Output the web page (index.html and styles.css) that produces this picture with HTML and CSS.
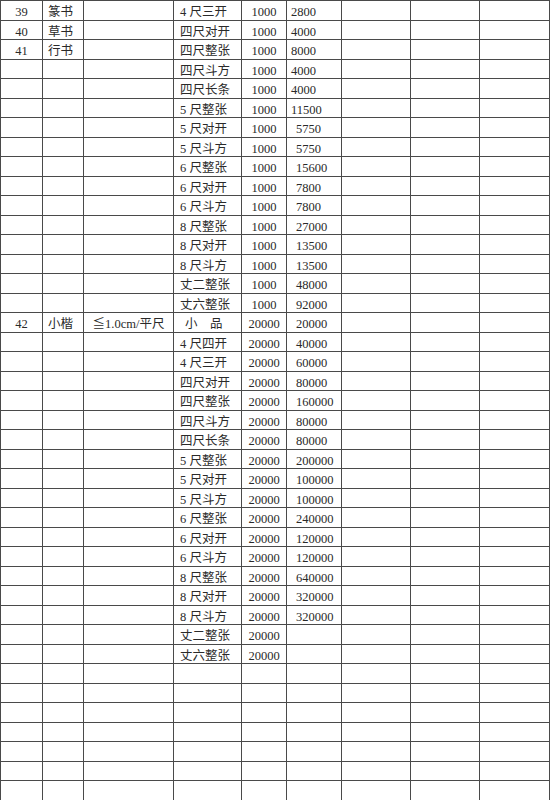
FILE: index.html
```html
<!DOCTYPE html>
<html lang="zh-CN">
<head>
<meta charset="utf-8">
<title>价格表</title>
<link rel="stylesheet" href="styles.css">
</head>
<body>
<div class="sheet">
  <div class="row a"><span>39</span><span>篆书</span><span></span><span>4 尺三开</span><span>1000</span><span>2800</span><span></span><span></span><span></span></div>
  <div class="row a"><span>40</span><span>草书</span><span></span><span>四尺对开</span><span>1000</span><span>4000</span><span></span><span></span><span></span></div>
  <div class="row a"><span>41</span><span>行书</span><span></span><span>四尺整张</span><span>1000</span><span>8000</span><span></span><span></span><span></span></div>
  <div class="row a"><span></span><span></span><span></span><span>四尺斗方</span><span>1000</span><span>4000</span><span></span><span></span><span></span></div>
  <div class="row a"><span></span><span></span><span></span><span>四尺长条</span><span>1000</span><span>4000</span><span></span><span></span><span></span></div>
  <div class="row a"><span></span><span></span><span></span><span>5 尺整张</span><span>1000</span><span>11500</span><span></span><span></span><span></span></div>
  <div class="row"><span></span><span></span><span></span><span>5 尺对开</span><span>1000</span><span>5750</span><span></span><span></span><span></span></div>
  <div class="row"><span></span><span></span><span></span><span>5 尺斗方</span><span>1000</span><span>5750</span><span></span><span></span><span></span></div>
  <div class="row"><span></span><span></span><span></span><span>6 尺整张</span><span>1000</span><span>15600</span><span></span><span></span><span></span></div>
  <div class="row"><span></span><span></span><span></span><span>6 尺对开</span><span>1000</span><span>7800</span><span></span><span></span><span></span></div>
  <div class="row"><span></span><span></span><span></span><span>6 尺斗方</span><span>1000</span><span>7800</span><span></span><span></span><span></span></div>
  <div class="row"><span></span><span></span><span></span><span>8 尺整张</span><span>1000</span><span>27000</span><span></span><span></span><span></span></div>
  <div class="row"><span></span><span></span><span></span><span>8 尺对开</span><span>1000</span><span>13500</span><span></span><span></span><span></span></div>
  <div class="row"><span></span><span></span><span></span><span>8 尺斗方</span><span>1000</span><span>13500</span><span></span><span></span><span></span></div>
  <div class="row"><span></span><span></span><span></span><span>丈二整张</span><span>1000</span><span>48000</span><span></span><span></span><span></span></div>
  <div class="row"><span></span><span></span><span></span><span>丈六整张</span><span>1000</span><span>92000</span><span></span><span></span><span></span></div>
  <div class="row"><span>42</span><span>小楷</span><span>≦1.0cm/平尺</span><span><b class="ind">小　品</b></span><span>20000</span><span>20000</span><span></span><span></span><span></span></div>
  <div class="row"><span></span><span></span><span></span><span>4 尺四开</span><span>20000</span><span>40000</span><span></span><span></span><span></span></div>
  <div class="row"><span></span><span></span><span></span><span>4 尺三开</span><span>20000</span><span>60000</span><span></span><span></span><span></span></div>
  <div class="row"><span></span><span></span><span></span><span>四尺对开</span><span>20000</span><span>80000</span><span></span><span></span><span></span></div>
  <div class="row"><span></span><span></span><span></span><span>四尺整张</span><span>20000</span><span>160000</span><span></span><span></span><span></span></div>
  <div class="row"><span></span><span></span><span></span><span>四尺斗方</span><span>20000</span><span>80000</span><span></span><span></span><span></span></div>
  <div class="row"><span></span><span></span><span></span><span>四尺长条</span><span>20000</span><span>80000</span><span></span><span></span><span></span></div>
  <div class="row"><span></span><span></span><span></span><span>5 尺整张</span><span>20000</span><span>200000</span><span></span><span></span><span></span></div>
  <div class="row"><span></span><span></span><span></span><span>5 尺对开</span><span>20000</span><span>100000</span><span></span><span></span><span></span></div>
  <div class="row"><span></span><span></span><span></span><span>5 尺斗方</span><span>20000</span><span>100000</span><span></span><span></span><span></span></div>
  <div class="row"><span></span><span></span><span></span><span>6 尺整张</span><span>20000</span><span>240000</span><span></span><span></span><span></span></div>
  <div class="row"><span></span><span></span><span></span><span>6 尺对开</span><span>20000</span><span>120000</span><span></span><span></span><span></span></div>
  <div class="row"><span></span><span></span><span></span><span>6 尺斗方</span><span>20000</span><span>120000</span><span></span><span></span><span></span></div>
  <div class="row"><span></span><span></span><span></span><span>8 尺整张</span><span>20000</span><span>640000</span><span></span><span></span><span></span></div>
  <div class="row"><span></span><span></span><span></span><span>8 尺对开</span><span>20000</span><span>320000</span><span></span><span></span><span></span></div>
  <div class="row"><span></span><span></span><span></span><span>8 尺斗方</span><span>20000</span><span>320000</span><span></span><span></span><span></span></div>
  <div class="row"><span></span><span></span><span></span><span>丈二整张</span><span>20000</span><span></span><span></span><span></span><span></span></div>
  <div class="row"><span></span><span></span><span></span><span>丈六整张</span><span>20000</span><span></span><span></span><span></span><span></span></div>
  <div class="row"><span></span><span></span><span></span><span></span><span></span><span></span><span></span><span></span><span></span></div>
  <div class="row"><span></span><span></span><span></span><span></span><span></span><span></span><span></span><span></span><span></span></div>
  <div class="row"><span></span><span></span><span></span><span></span><span></span><span></span><span></span><span></span><span></span></div>
  <div class="row"><span></span><span></span><span></span><span></span><span></span><span></span><span></span><span></span><span></span></div>
  <div class="row"><span></span><span></span><span></span><span></span><span></span><span></span><span></span><span></span><span></span></div>
  <div class="row"><span></span><span></span><span></span><span></span><span></span><span></span><span></span><span></span><span></span></div>
  <div class="row"><span></span><span></span><span></span><span></span><span></span><span></span><span></span><span></span><span></span></div>
</div>
</body>
</html>
```
FILE: styles.css
```css
html, body {
  margin: 0;
  padding: 0;
  background: #ffffff;
}

.sheet {
  display: grid;
  grid-template-columns: 42px 41px 90px 68px 45px 55px 69px 69px 70px;
  grid-auto-rows: 19.5px;
  width: 550px;
  box-sizing: border-box;
  border-left: 1px solid #4a4a4a;
  border-top: 1px solid #4a4a4a;
  font-family: "Liberation Serif", "Noto Sans CJK SC", serif;
  font-size: 12.5px;
  color: #2a2a2a;
}

.row {
  display: contents;
}

.row > span {
  box-sizing: border-box;
  border-right: 1px solid #4a4a4a;
  border-bottom: 1px solid #4a4a4a;
  padding-top: 2px;
  line-height: 18px;
  white-space: nowrap;
  overflow: hidden;
}

.row > span:nth-child(1) {
  text-align: center;
}

.row > span:nth-child(2) {
  padding-left: 5px;
}

.row > span:nth-child(3) {
  text-align: center;
}

.row > span:nth-child(4) {
  padding-left: 6px;
}

.row > span:nth-child(5) {
  text-align: center;
}

.row > span:nth-child(6) {
  padding-left: 9px;
}

.row.a > span:nth-child(6) {
  padding-left: 4px;
}

.ind {
  font-weight: normal;
  padding-left: 5px;
}
```
